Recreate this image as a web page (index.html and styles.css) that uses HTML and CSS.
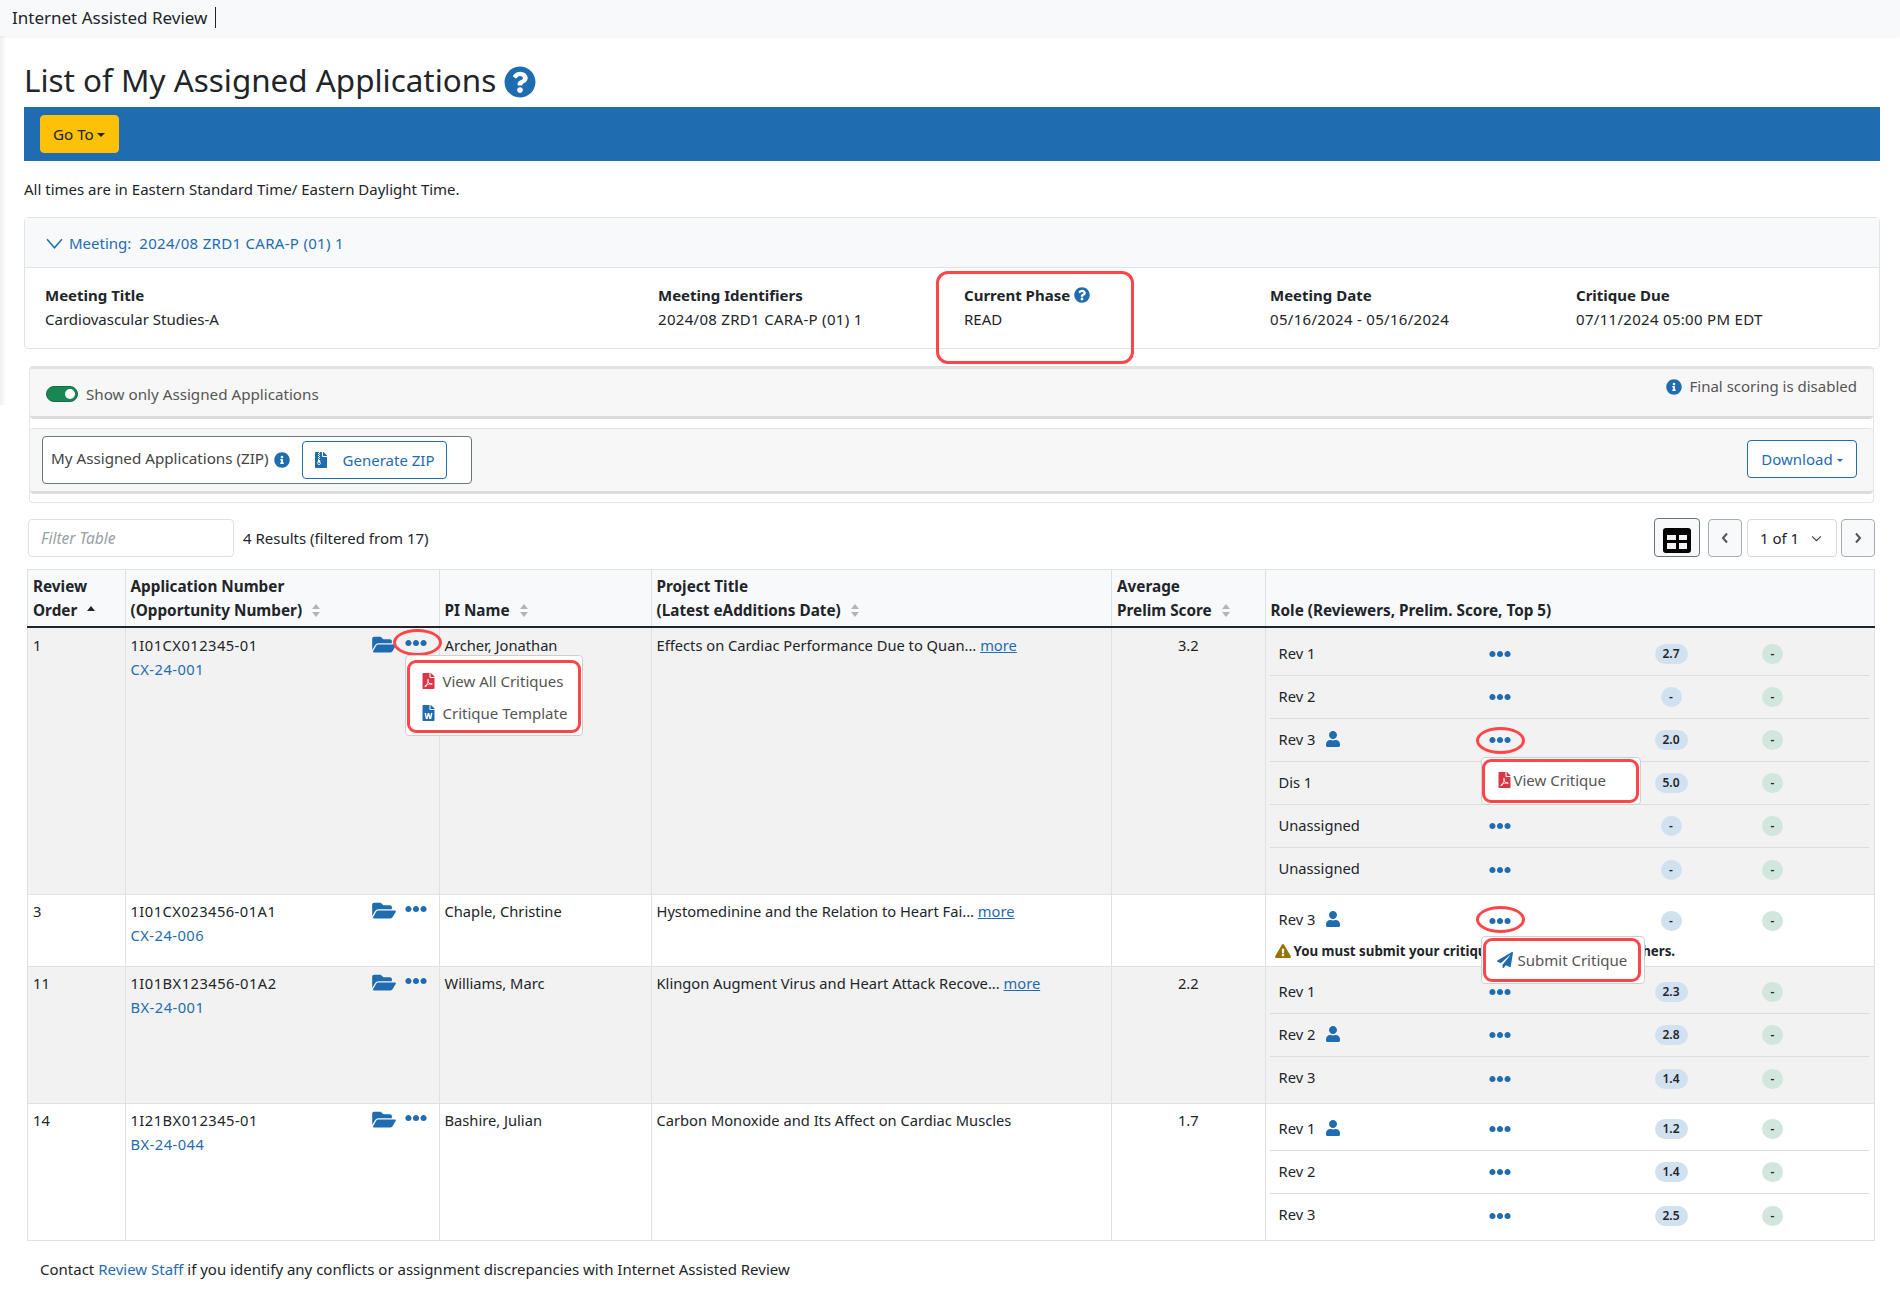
FILE: index.html
```html
<!DOCTYPE html>
<html lang="en">
<head>
<meta charset="utf-8">
<title>Internet Assisted Review</title>
<link rel="stylesheet" href="styles.css">
</head>
<body>
<svg class="defs" aria-hidden="true">
  <symbol id="folder" viewBox="0 0 576 512"><path d="M572.694 292.093L500.27 416.248A63.997 63.997 0 0 1 444.989 448H45.025c-18.523 0-30.064-20.093-20.731-36.093l72.424-124.155A64 64 0 0 1 152 256h399.964c18.523 0 30.064 20.093 20.73 36.093zM152 224h328v-48c0-26.51-21.49-48-48-48H272l-64-64H48C21.49 64 0 85.49 0 112v278.046l69.077-118.418C86.214 242.25 117.989 224 152 224z"/></symbol>
  <symbol id="dots" viewBox="0 0 512 512"><path d="M328 256c0 39.8-32.2 72-72 72s-72-32.2-72-72 32.2-72 72-72 72 32.2 72 72zm104-72c-39.8 0-72 32.2-72 72s32.2 72 72 72 72-32.2 72-72-32.2-72-72-72zm-352 0c-39.8 0-72 32.2-72 72s32.2 72 72 72 72-32.2 72-72-32.2-72-72-72z"/></symbol>
  <symbol id="question" viewBox="0 0 512 512"><path d="M504 256c0 136.997-111.043 248-248 248S8 392.997 8 256C8 119.083 119.043 8 256 8s248 111.083 248 248zM262.655 90c-54.497 0-89.255 22.957-116.549 63.758-3.536 5.286-2.353 12.415 2.715 16.258l34.699 26.31c5.205 3.947 12.621 3.008 16.665-2.122 17.864-22.658 30.113-35.797 57.303-35.797 20.429 0 45.698 13.148 45.698 32.958 0 14.976-12.363 22.667-32.534 33.976C247.128 238.528 216 254.941 216 296v4c0 6.627 5.373 12 12 12h56c6.627 0 12-5.373 12-12v-1.333c0-28.462 83.186-29.647 83.186-106.667 0-58.002-60.165-102-116.531-102zM256 338c-25.365 0-46 20.635-46 46 0 25.364 20.635 46 46 46s46-20.636 46-46c0-25.365-20.635-46-46-46z"/></symbol>
  <symbol id="info" viewBox="0 0 512 512"><path d="M256 8C119.043 8 8 119.083 8 256c0 136.997 111.043 248 248 248s248-111.003 248-248C504 119.083 392.957 8 256 8zm0 110c23.196 0 42 18.804 42 42s-18.804 42-42 42-42-18.804-42-42 18.804-42 42-42zm56 254c0 6.627-5.373 12-12 12h-88c-6.627 0-12-5.373-12-12v-24c0-6.627 5.373-12 12-12h12v-64h-12c-6.627 0-12-5.373-12-12v-24c0-6.627 5.373-12 12-12h64c6.627 0 12 5.373 12 12v100h12c6.627 0 12 5.373 12 12v24z"/></symbol>
  <symbol id="user" viewBox="0 0 448 512"><path d="M224 256c70.7 0 128-57.3 128-128S294.7 0 224 0 96 57.3 96 128s57.3 128 128 128zm89.6 32h-16.7c-22.2 10.2-46.9 16-72.9 16s-50.6-5.8-72.9-16h-16.7C60.2 288 0 348.2 0 422.4V464c0 26.5 21.5 48 48 48h352c26.5 0 48-21.5 48-48v-41.6c0-74.2-60.2-134.4-134.4-134.4z"/></symbol>
  <symbol id="plane" viewBox="0 0 512 512"><path d="M476 3.2L12.5 270.6c-18.1 10.4-15.8 35.6 2.2 43.2L121 358.4l287.3-253.2c5.5-4.9 13.3 2.6 8.6 8.3L176 407v80.5c0 23.6 28.5 32.9 42.5 15.8L282 426l124.6 52.2c14.2 6 30.4-2.9 33-18.2l72-432C515 7.8 493.3-6.8 476 3.2z"/></symbol>
  <symbol id="warn" viewBox="0 0 576 512"><path d="M569.517 440.013C587.975 472.007 564.806 512 527.94 512H48.054c-36.937 0-59.999-40.055-41.577-71.987L246.423 24.035c18.467-32.009 64.72-31.951 83.154 0l239.94 416.028zM288 354c-25.405 0-46 20.595-46 46s20.595 46 46 46 46-20.595 46-46-20.595-46-46-46zm-43.673-165.346l7.418 136c.347 6.364 5.609 11.346 11.982 11.346h48.546c6.373 0 11.635-4.982 11.982-11.346l7.418-136c.375-6.874-5.098-12.654-11.982-12.654h-63.383c-6.884 0-12.356 5.78-11.981 12.654z"/></symbol>
  <symbol id="pdf" viewBox="0 0 384 512"><path d="M181.9 256.1c-5-16-4.9-46.9-2-46.9 8.4 0 7.6 36.9 2 46.9zm-1.7 47.2c-7.7 20.2-17.3 43.3-28.4 62.7 18.3-7 39-17.2 62.9-21.9-12.7-9.6-24.9-23.4-34.5-40.8zM86.1 428.1c0 .8 13.2-5.4 34.9-40.2-6.7 6.3-29.1 24.5-34.9 40.2zM248 160h136v328c0 13.3-10.7 24-24 24H24c-13.3 0-24-10.7-24-24V24C0 10.7 10.7 0 24 0h200v136c0 13.2 10.8 24 24 24zm-8 171.8c-20-12.2-33.3-29-42.7-53.8 4.5-18.5 11.6-46.6 6.2-64.2-4.7-29.4-42.4-26.5-47.8-6.8-5 18.3-.4 44.1 8.1 77-11.6 27.6-28.7 64.6-40.8 85.8-.1 0-.1.1-.2.1-27.1 13.9-73.6 44.5-54.5 68 5.6 6.9 16 10 21.5 10 17.9 0 35.7-18 61.1-61.8 25.8-8.5 54.1-19.1 79-23.2 21.7 11.8 47.1 19.5 64 19.5 29.2 0 31.2-32 19.7-43.4-13.9-13.6-54.3-9.7-73.6-7.2zM377 105L279 7c-4.5-4.5-10.6-7-17-7h-6v128h128v-6.1c0-6.3-2.5-12.4-7-16.9zm-74.1 255.3c4.1-2.7-2.5-11.9-42.8-9 37.1 15.8 42.8 9 42.8 9z"/></symbol>
  <symbol id="word" viewBox="0 0 384 512"><path d="M224 136V0H24C10.7 0 0 10.7 0 24v464c0 13.3 10.7 24 24 24h336c13.3 0 24-10.7 24-24V160H248c-13.2 0-24-10.8-24-24zm57.1 120H305c7.7 0 13.4 7.1 11.7 14.7l-38 168c-1.2 5.5-6.1 9.3-11.7 9.3h-38c-5.5 0-10.3-3.8-11.6-9.1-25.8-103.5-20.8-81.2-25.6-110.5h-.5c-1.1 14.3-2.4 17.4-25.6 110.5-1.3 5.3-6.1 9.1-11.6 9.1H117c-5.6 0-10.5-3.9-11.7-9.4l-37.8-168c-1.7-7.5 4-14.6 11.7-14.6h24.5c5.7 0 10.7 4 11.8 9.7 15.6 78 20.1 109.5 21 122.2 1.6-10.2 7.3-32.7 29.4-122.7 1.3-5.4 6.1-9.1 11.7-9.1h29.1c5.6 0 10.4 3.8 11.7 9.2 24 100.4 28.8 124 29.6 129.4-.2-11.2-2.6-17.8 21.6-129.2 1-5.6 5.9-9.5 11.5-9.5zM384 121.9v6.1H256V0h6.1c6.4 0 12.5 2.5 17 7l97.9 98c4.5 4.5 7 10.6 7 16.9z"/></symbol>
  <symbol id="zip" viewBox="0 0 384 512"><path d="M377 105L279.1 7c-4.5-4.5-10.6-7-17-7H256v128h128v-6.1c0-6.3-2.5-12.4-7-16.9zM128.4 336c-17.9 0-32.4 12.1-32.4 27 0 15 14.6 27 32.5 27s32.4-12.1 32.4-27-14.6-27-32.5-27zM224 136V0h-63.6v32h-32V0H24C10.7 0 0 10.7 0 24v464c0 13.3 10.7 24 24 24h336c13.3 0 24-10.7 24-24V160H248c-13.2 0-24-10.8-24-24zM95.9 32h32v32h-32zm32.3 384c-33.2 0-58-30.4-51.4-62.9L96.4 256v-32h32v-32h-32v-32h32v-32h-32V96h32V64h32v32h-32v32h32v32h-32v32h32v32h-32v32h22.1c5.7 0 10.7 4.1 11.8 9.7l17.3 87.7c6.4 32.4-18.4 62.6-51.4 62.6z"/></symbol>
</svg>

<div class="shade"></div>
<header class="topbar"><span class="brand">Internet Assisted Review</span></header>

<main class="page">
  <h1 class="title">List of My Assigned Applications <svg class="i title-q"><use href="#question"/></svg></h1>
  <div class="navbar"><button class="goto">Go To<span class="caret"></span></button></div>
  <p class="note">All times are in Eastern Standard Time/ Eastern Daylight Time.</p>

  <section class="meeting">
    <div class="meeting-head">
      <svg class="chev" viewBox="0 0 16 10"><path d="M1 1l7 8 7-8" fill="none" stroke="#1f6cb0" stroke-width="1.4"/></svg>
      <span class="link">Meeting:</span><span class="link meeting-id d">2024/08 ZRD1 CARA-P (01) 1</span>
    </div>
    <div class="meeting-body">
      <div><b>Meeting Title</b><div>Cardiovascular Studies-A</div></div>
      <div><b>Meeting Identifiers</b><div class="d">2024/08 ZRD1 CARA-P (01) 1</div></div>
      <div class="phase"><b>Current Phase</b> <svg class="i phase-q"><use href="#question"/></svg><div>READ</div><span class="mark phase-mark"></span></div>
      <div><b>Meeting Date</b><div class="d">05/16/2024 - 05/16/2024</div></div>
      <div><b>Critique Due</b><div class="d">07/11/2024 05:00 PM EDT</div></div>
    </div>
  </section>

  <section class="tools">
    <div class="tool-a">
      <label class="toggle"><span class="switch"></span>Show only Assigned Applications</label>
      <span class="disabled-note"><svg class="i info-lg"><use href="#info"/></svg>Final scoring is disabled</span>
    </div>
    <div class="tool-b">
      <div class="zipbox">
        <span class="zip-label">My Assigned Applications (ZIP)</span>
        <svg class="i info-lg"><use href="#info"/></svg>
        <button class="btn-zip"><svg class="i zip-i"><use href="#zip"/></svg>Generate ZIP</button>
      </div>
      <button class="btn-dl">Download<span class="caret"></span></button>
    </div>
  </section>

  <div class="filterbar">
    <div class="filter">Filter Table</div>
    <span class="results">4 Results (filtered from 17)</span>
    <div class="pager">
      <button class="gridbtn"><span class="gridicon"><i></i><i></i><i></i><i></i></span></button>
      <button class="pg"><svg viewBox="0 0 8 12"><path d="M6 1.5L2 6l4 4.5" fill="none" stroke="#555" stroke-width="2"/></svg></button>
      <div class="pg-select"><span>1 of 1</span><svg viewBox="0 0 12 8"><path d="M1 1.5l5 5 5-5" fill="none" stroke="#444" stroke-width="1.4"/></svg></div>
      <button class="pg"><svg viewBox="0 0 8 12"><path d="M2 1.5L6 6l-4 4.5" fill="none" stroke="#555" stroke-width="2"/></svg></button>
    </div>
  </div>

  <table class="apps">
    <colgroup><col class="c1"><col class="c2"><col class="c3"><col class="c4"><col class="c5"><col class="c6"></colgroup>
    <thead>
      <tr>
        <th>Review<br>Order <span class="sort-up"></span></th>
        <th>Application Number<br>(Opportunity Number) <span class="sort"></span></th>
        <th>PI Name <span class="sort"></span></th>
        <th>Project Title<br>(Latest eAdditions Date) <span class="sort"></span></th>
        <th>Average<br>Prelim Score <span class="sort"></span></th>
        <th>Role (Reviewers, Prelim. Score, Top 5)</th>
      </tr>
    </thead>
    <tbody>
      <tr class="odd">
        <td>1</td>
        <td><div class="app"><div class="d">1I01CX012345-01<br><a class="link" href="#">CX-24-001</a></div>
          <div class="actions"><svg class="i folder"><use href="#folder"/></svg><svg class="i dots"><use href="#dots"/></svg>
            <span class="mark oval oval-app"></span>
            <div class="menu menu-app"><div class="hl hl-app">
              <div class="mi"><svg class="i pdf"><use href="#pdf"/></svg>View All Critiques</div>
              <div class="mi"><svg class="i word"><use href="#word"/></svg>Critique Template</div>
            </div></div>
          </div></div></td>
        <td>Archer, Jonathan</td>
        <td>Effects on Cardiac Performance Due to Quan... <a class="more" href="#">more</a></td>
        <td class="num">3.2</td>
        <td class="roles">
          <div class="rr"><span>Rev 1</span><svg class="i dots"><use href="#dots"/></svg><span class="b s">2.7</span><span class="b g">-</span></div>
          <div class="rr"><span>Rev 2</span><svg class="i dots"><use href="#dots"/></svg><span class="b s e">-</span><span class="b g">-</span></div>
          <div class="rr"><span>Rev 3 <svg class="i user"><use href="#user"/></svg></span><svg class="i dots"><use href="#dots"/></svg><span class="b s">2.0</span><span class="b g">-</span>
            <span class="mark oval oval-role"></span>
            <div class="menu menu-view"><div class="hl hl-role"><div class="mi"><svg class="i pdf"><use href="#pdf"/></svg>View Critique</div></div></div>
          </div>
          <div class="rr"><span>Dis 1</span><span></span><span class="b s">5.0</span><span class="b g">-</span></div>
          <div class="rr"><span>Unassigned</span><svg class="i dots"><use href="#dots"/></svg><span class="b s e">-</span><span class="b g">-</span></div>
          <div class="rr"><span>Unassigned</span><svg class="i dots"><use href="#dots"/></svg><span class="b s e">-</span><span class="b g">-</span></div>
        </td>
      </tr>
      <tr>
        <td>3</td>
        <td><div class="app"><div class="d">1I01CX023456-01A1<br><a class="link" href="#">CX-24-006</a></div>
          <div class="actions"><svg class="i folder"><use href="#folder"/></svg><svg class="i dots"><use href="#dots"/></svg></div></div></td>
        <td>Chaple, Christine</td>
        <td>Hystomedinine and the Relation to Heart Fai... <a class="more" href="#">more</a></td>
        <td class="num"></td>
        <td class="roles flat">
          <div class="rr"><span>Rev 3 <svg class="i user"><use href="#user"/></svg></span><svg class="i dots"><use href="#dots"/></svg><span class="b s e">-</span><span class="b g">-</span>
            <span class="mark oval oval-role oval-low"></span>
            <div class="menu menu-submit"><div class="hl hl-submit"><div class="mi"><svg class="i plane"><use href="#plane"/></svg>Submit Critique</div></div></div>
          </div>
          <div class="warnline"><svg class="i warn"><use href="#warn"/></svg>You must submit your critique to view critiques of others.</div>
        </td>
      </tr>
      <tr class="odd">
        <td>11</td>
        <td><div class="app"><div class="d">1I01BX123456-01A2<br><a class="link" href="#">BX-24-001</a></div>
          <div class="actions"><svg class="i folder"><use href="#folder"/></svg><svg class="i dots"><use href="#dots"/></svg></div></div></td>
        <td>Williams, Marc</td>
        <td>Klingon Augment Virus and Heart Attack Recove... <a class="more" href="#">more</a></td>
        <td class="num">2.2</td>
        <td class="roles tight">
          <div class="rr"><span>Rev 1</span><svg class="i dots"><use href="#dots"/></svg><span class="b s">2.3</span><span class="b g">-</span></div>
          <div class="rr"><span>Rev 2 <svg class="i user"><use href="#user"/></svg></span><svg class="i dots"><use href="#dots"/></svg><span class="b s">2.8</span><span class="b g">-</span></div>
          <div class="rr"><span>Rev 3</span><svg class="i dots"><use href="#dots"/></svg><span class="b s">1.4</span><span class="b g">-</span></div>
        </td>
      </tr>
      <tr>
        <td>14</td>
        <td><div class="app"><div class="d">1I21BX012345-01<br><a class="link" href="#">BX-24-044</a></div>
          <div class="actions"><svg class="i folder"><use href="#folder"/></svg><svg class="i dots"><use href="#dots"/></svg></div></div></td>
        <td>Bashire, Julian</td>
        <td>Carbon Monoxide and Its Affect on Cardiac Muscles</td>
        <td class="num">1.7</td>
        <td class="roles tight">
          <div class="rr"><span>Rev 1 <svg class="i user"><use href="#user"/></svg></span><svg class="i dots"><use href="#dots"/></svg><span class="b s">1.2</span><span class="b g">-</span></div>
          <div class="rr"><span>Rev 2</span><svg class="i dots"><use href="#dots"/></svg><span class="b s">1.4</span><span class="b g">-</span></div>
          <div class="rr"><span>Rev 3</span><svg class="i dots"><use href="#dots"/></svg><span class="b s">2.5</span><span class="b g">-</span></div>
        </td>
      </tr>
    </tbody>
  </table>

  <p class="contact">Contact <a class="link" href="#">Review Staff</a> if you identify any conflicts or assignment discrepancies with Internet Assisted Review</p>
</main>
</body>
</html>
```

FILE: styles.css
```css
* { box-sizing: border-box; }
html, body { margin: 0; padding: 0; }
body {
  position: relative;
  font-family: "Noto Sans", "Open Sans", sans-serif;
  font-size: 15px;
  line-height: 24px;
  color: #212529;
  background: #fff;
  min-height: 1303px;
}
.defs { display: none; }
.i { fill: #1f6cb0; display: inline-block; vertical-align: middle; }
.link { color: #1f6cb0; text-decoration: none; }
.d { letter-spacing: .3px; }
b { font-weight: 700; }
button { font: inherit; cursor: pointer; }

.shade {
  position: absolute; left: 0; top: 36px; width: 6px; height: 369px;
  background: linear-gradient(to right, #efefef, #fff);
}
.topbar {
  height: 36px; background: #f8f9fa; padding: 6px 0 0 12px;
  box-shadow: 0 1px 3px rgba(0,0,0,.06);
  position: relative;
}
.brand {
  display: inline-block; font-size: 17px; line-height: 21px;
  padding-right: 8px; border-right: 1px solid #212529;
}

.page { padding: 0 20px 0 24px; }
.title {
  margin: 0; height: 71px; padding-top: 24px;
  font-size: 31.4px; line-height: 40px; font-weight: 400;
}
.title-q { width: 32px; height: 32px; margin-top: -3px; }
.navbar { height: 54px; background: #1f6cb0; padding: 8px 16px; }
.goto {
  height: 38px; width: 79px; padding: 0 12px; text-align: left; font-size: 15.2px;
  background: #ffc107; color: #212529; border: 1px solid #ffc107; border-radius: 4px;
}
.caret {
  display: inline-block; margin-left: 3px; vertical-align: 3px;
  border-top: 4px solid currentColor; border-left: 4px solid transparent; border-right: 4px solid transparent;
}
.note { margin: 0; padding-top: 16px; height: 56px; }

.meeting { border: 1px solid #dfe3e6; border-radius: 4px; }
.meeting-head {
  height: 50px; background: #f8f9fa; border-bottom: 1px solid #dfe3e6;
  padding: 13px 0 0 21px; display: flex; align-items: flex-start;
}
.chev { width: 17px; height: 11px; margin: 7px 6px 0 0; }
.meeting-id { margin-left: 8px; }
.meeting-body {
  display: grid; grid-template-columns: 613px 306px 306px 306px 1fr;
  padding: 15px 0 0 20px; height: 80px;
}
.phase { position: relative; }
.phase-q { width: 16px; height: 16px; margin-top: -3px; }
.mark { position: absolute; border: 3px solid #ff4548; }
.phase-mark { left: -28px; top: -12px; width: 198px; height: 93px; border-radius: 12px; }

.tools {
  margin: 17px 6px 0 5px; height: 137px;
  border: 1px solid #e6e6e6; border-top: 0; border-radius: 4px;
}
.tool-a {
  height: 53px; background: #f7f7f7; border-top: 3px solid #e2e2e2; border-bottom: 3px solid #dcdcdc;
  border-radius: 4px; padding: 0 16px 0 16px;
  display: flex; justify-content: space-between;
}
.toggle { display: flex; align-items: center; color: #555; height: 54px; padding-bottom: 8px; padding-top: 4px; gap: 8px; font-size: 15.2px; }
.switch {
  width: 32px; height: 16px; border-radius: 8px; background: #198754; position: relative;
  border: 1px solid #146c43;
}
.switch::after {
  content: ""; position: absolute; right: 2px; top: 2px; width: 10px; height: 10px; border-radius: 50%; background: #fff;
}
.disabled-note { color: #555; padding-top: 5px; }
.info-lg { width: 16px; height: 16px; margin: -1px 8px 0 0; }
.tool-b {
  margin-top: 9px; height: 66px; background: #f7f7f7; border-top: 1px solid #e2e2e2; border-bottom: 3px solid #dcdcdc;
  border-radius: 4px; padding: 7px 16px 0 12px; display: flex; justify-content: space-between; align-items: flex-start;
}
.zipbox {
  width: 430px; height: 48px; background: #fff; border: 1px solid #6c757d; border-radius: 4px;
  padding: 0 0 0 8px; display: flex; align-items: center; color: #444;
}
.zip-label { font-size: 15.2px; padding-bottom: 5px; }
.zipbox .info-lg { margin: 0 0 0 5px; }
.btn-zip {
  margin-left: 12px; width: 145px; height: 38px; background: #fff; border: 1px solid #1f6cb0; border-radius: 4px;
  color: #1f6cb0; display: flex; align-items: center; padding: 0 0 0 12px;
}
.zip-i { width: 12px; height: 16px; margin-right: 16px; }
.btn-dl {
  margin-top: 4px; width: 110px; height: 38px; background: #fff; border: 1px solid #1f6cb0; border-radius: 4px;
  color: #1f6cb0; padding: 0;
}
.btn-dl .caret { border-width: 3.5px 3.5px 0; margin-left: 4px; }

.filterbar {
  margin: 16px 5px 0 4px; height: 50px; display: flex; align-items: flex-start;
}
.filter {
  width: 206px; height: 38px; border: 1px solid #dee2e6; border-radius: 4px; padding: 6px 12px;
  font-style: italic; color: #9aa0a6; font-size: 15.5px;
}
.results { margin: 7px 0 0 9px; }
.pager { margin-left: auto; display: flex; align-items: flex-start; margin-top: -1px; }
.gridbtn {
  width: 46px; height: 39px; background: #f8f9fa; border: 1px solid #6c757d; border-radius: 4px;
  padding: 5px 0 0 8px; margin-right: 8px; display: block;
}
.gridicon {
  width: 28px; height: 25px; background: #000; border-radius: 3px; padding: 7px 4px 4px;
  display: grid; grid-template-columns: 1fr 1fr; grid-template-rows: 1fr 1fr; gap: 3px;
}
.gridicon i { background: #f2f2f2; display: block; }
.pg {
  width: 34px; height: 38px; margin-top: 1px; background: #f8f9fa; border: 1px solid #a8acb0; border-radius: 4px;
  padding: 0; display: flex; align-items: center; justify-content: center;
}
.pg svg { width: 8px; height: 12px; }
.pg-select {
  width: 90px; height: 38px; margin: 1px 4px 0 5px; background: #fff; border: 1px solid #d5d9dd; border-radius: 4px;
  display: flex; align-items: center; padding-left: 12px; gap: 12px;
}
.pg-select svg { width: 11px; height: 7px; }

.apps {
  width: 1847px; margin-left: 3px; border-collapse: collapse; table-layout: fixed;
  border: 1px solid #dee2e6; font-size: 14.7px;
}
.c1 { width: 97.5px; } .c2 { width: 314px; } .c3 { width: 212px; }
.c4 { width: 460.5px; } .c5 { width: 153.5px; } .c6 { width: 609.5px; }
.apps th {
  background: #f8f9fa; font-weight: 700; text-align: left; vertical-align: bottom; font-size: 15.3px;
  padding: 4px 5px 4px; border: 1px solid #dee2e6; border-bottom: 2px solid #212529; height: 57px;
}
.apps td { vertical-align: top; padding: 5px 5px 0; border: 1px solid #dee2e6; }
.apps tbody tr + tr td { padding-top: 4px; }
.odd td { background: #f2f2f2; }
.num { text-align: center; }
.app { display: flex; justify-content: space-between; padding-right: 7px; }
.app .d { letter-spacing: .47px; }
.actions { position: relative; display: flex; align-items: flex-start; height: 16px; margin-top: 3px; }
.folder { width: 24px; height: 21px; margin-top: -2px; }
.actions .dots { width: 22px; height: 22px; margin: -4px 0 0 9px; }
.more { color: #1f6cb0; text-decoration: underline; }

.sort, .sort-up { display: inline-block; position: relative; width: 9px; vertical-align: -1px; }
.sort { height: 13px; margin-left: 6px; }
.sort::before, .sort::after, .sort-up::before {
  content: ""; position: absolute; left: 0;
  border-left: 4.5px solid transparent; border-right: 4.5px solid transparent;
}
.sort::before { top: 0; border-bottom: 5.5px solid #adb5bd; }
.sort::after { bottom: 0; border-top: 5.5px solid #adb5bd; }
.sort-up { height: 5px; margin-left: 6px; vertical-align: 5px; }
.sort-up::before { top: 0; border-bottom: 5px solid #212529; }

.apps td.roles { padding: 5px 5px 3px 4px; }
.apps td.roles.flat { padding: 4px 5px 4px 4px; }
.apps td.roles.tight { padding: 4px 5px 3px 4px; }
.rr {
  position: relative; height: 43px;
  display: grid; grid-template-columns: 200px 60px 90px 103px 100px; align-items: center;
  border-bottom: 1px solid #dcdcdc;
}
.rr:last-child, .flat .rr { border-bottom: 0; }
.rr > span:first-child { padding: 0 0 3px 9px; }
.rr .dots { width: 22px; height: 22px; justify-self: center; }
.b {
  justify-self: center; height: 20px; border-radius: 10px; font-size: 12px; font-weight: 600;
  line-height: 20px; text-align: center; width: 21px;
}
.s { grid-column: 4; background: #d2e1f0; width: 33px; }
.s.e { width: 21px; }
.g { grid-column: 5; background: #d1e7dd; }
.user { width: 16px; height: 16px; margin: -4px 0 0 6px; }

.warnline { font-weight: 700; font-size: 13.3px; line-height: 20px; padding: 0 0 3px 5px; height: 20px; display: flex; align-items: center; white-space: nowrap; }
.warn { width: 16px; height: 14px; margin-right: 3px; fill: #997404; }

.oval { border-radius: 50%; width: 49px; height: 27px; z-index: 4; }
.oval-app { left: 21px; top: -7px; }
.oval-role { left: 206px; top: 8px; }
.oval-low { top: 7px; }
.menu {
  position: absolute; z-index: 5; background: #fff; border: 1px solid #cfcfcf; border-radius: 4px; font-size: 15px;
}
.menu-app { left: 33px; top: 19px; width: 178px; height: 81px; }
.menu-view { left: 211px; top: 38px; width: 160px; height: 48px; }
.menu-submit { left: 211px; top: 37px; width: 164px; height: 48px; }
.hl { border: 3px solid #ff4548; border-radius: 9px; color: #555; }
.hl-app { margin: 4px 1px; height: 73px; padding: 2px 0 0 12px; }
.hl-role { margin: 1px 1px 0 0; height: 44px; padding: 6px 0 0 13px; }
.hl-submit { margin: 1px 3px 0 1px; height: 44px; padding: 7px 0 0 11px; }
.mi { display: flex; align-items: center; height: 32px; white-space: nowrap; }
.hl-role .mi, .hl-submit .mi { height: 24px; }
.pdf { width: 13px; height: 16px; fill: #dc3545; margin-right: 8px; }
.word { width: 13px; height: 16px; margin-right: 8px; }
.hl-role .pdf { margin-right: 3px; }
.plane { width: 16px; height: 16px; margin-right: 5px; }

.contact { margin: 16px 0 0 16px; }
```
